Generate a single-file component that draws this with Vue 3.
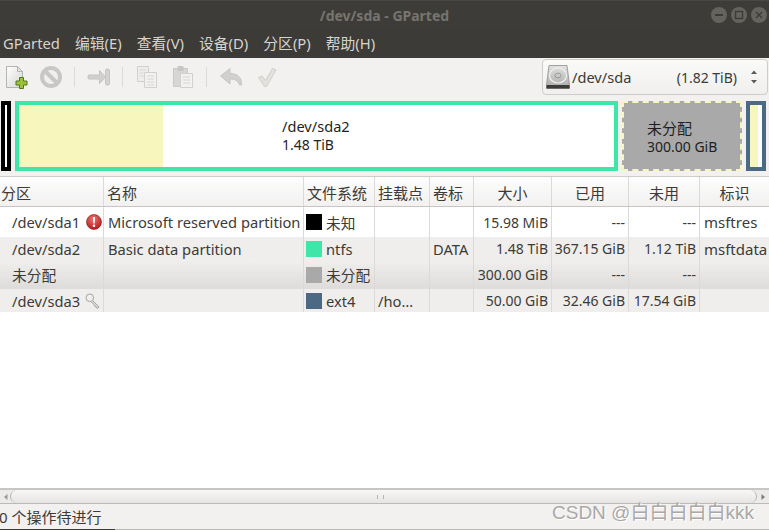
<script setup>
const menus = ['GParted', '编辑(E)', '查看(V)', '设备(D)', '分区(P)', '帮助(H)']
const heads = [
  { t: '分区', c: 'left' }, { t: '名称', c: 'left' }, { t: '文件系统', c: 'left' },
  { t: '挂载点', c: 'left' }, { t: '卷标', c: 'left' }, { t: '大小', c: 'mid' },
  { t: '已用', c: 'mid' }, { t: '未用', c: 'mid' }, { t: '标识', c: 'mid' }
]
const rows = [
  { cls: 'r1', p: '/dev/sda1', icon: 'err', name: 'Microsoft reserved partition', color: '#000000', fs: '未知', mount: '', label: '', size: '15.98 MiB', used: '---', free: '---', flag: 'msftres' },
  { cls: 'r2', p: '/dev/sda2', icon: '', name: 'Basic data partition', color: '#40e5aa', fs: 'ntfs', mount: '', label: 'DATA', size: '1.48 TiB', used: '367.15 GiB', free: '1.12 TiB', flag: 'msftdata' },
  { cls: 'r3', p: '未分配', icon: '', name: '', color: '#a9a9a9', fs: '未分配', mount: '', label: '', size: '300.00 GiB', used: '---', free: '---', flag: '' },
  { cls: 'r4', p: '/dev/sda3', icon: 'key', name: '', color: '#4b6983', fs: 'ext4', mount: '/ho…', label: '', size: '50.00 GiB', used: '32.46 GiB', free: '17.54 GiB', flag: '' }
]
</script>

<template>
  <div class="win">
    <header class="title">
      <span class="title-text">/dev/sda - GParted</span>
      <div class="wbtns">
        <span class="wbtn"><svg width="16" height="16" viewBox="0 0 16 16"><path d="M4 8h8" stroke="#3c3b37" stroke-width="2"/></svg></span>
        <span class="wbtn"><svg width="16" height="16" viewBox="0 0 16 16"><rect x="4.500" y="4.500" width="7" height="7" fill="none" stroke="#3c3b37" stroke-width="1.400"/></svg></span>
        <span class="wbtn"><svg width="16" height="16" viewBox="0 0 16 16"><path d="M5 5l6 6M11 5l-6 6" stroke="#3c3b37" stroke-width="1.400"/></svg></span>
      </div>
    </header>

    <nav class="menu">
      <span v-for="m in menus" :key="m" class="mi">{{ m }}</span>
    </nav>

    <div class="toolbar">
      <div class="tools">
        <svg class="ic" width="24" height="24" viewBox="0 0 24 24">
          <defs><linearGradient id="pg" x1="0" y1="0" x2="1" y2="1"><stop offset="0" stop-color="#ffffff"/><stop offset="1" stop-color="#d5d5d3"/></linearGradient></defs>
          <path d="M1.500 1.500h11l5 5v16h-16z" fill="url(#pg)" stroke="#b4b4b2"/>
          <path d="M12.500 1.500v5h5z" fill="#e4e4e2" stroke="#b4b4b2"/>
          <path d="M14.500 12.500h4v3.500h3.500v4h-3.500v3.500h-4v-3.500h-3.500v-4h3.500z" fill="#9cc23c" stroke="#4e7a10"/>
        </svg>
        <svg class="ic stop" width="24" height="24" viewBox="0 0 24 24">
          <circle cx="12" cy="12" r="9" fill="#f0efee" stroke="#c9c7c5" stroke-width="4"/>
          <path d="M5.500 5.500l13 13" stroke="#c9c7c5" stroke-width="4"/>
        </svg>
        <span class="sep first"></span>
        <svg class="ic res" width="24" height="24" viewBox="0 0 24 24">
          <path d="M1.500 10h11v-4.500l6 6.500-6 6.500v-4.500h-11q-1-2 0-4z" fill="#d2d0ce" stroke="#c6c4c2" stroke-linejoin="round"/>
          <rect x="18.500" y="4" width="4" height="16" rx="1.500" fill="#d4d2d0" stroke="#c6c4c2"/>
        </svg>
        <span class="sep second"></span>
        <svg class="ic copy" width="24" height="24" viewBox="0 0 24 24">
          <path d="M2.500 1.500h11v15h-11z" fill="#eeedec" stroke="#d2d0ce"/>
          <path d="M9.500 7.500h12v15h-12z" fill="#f2f1f0" stroke="#d2d0ce"/>
          <path d="M4.500 5h7M4.500 8h4M4.500 11h4M12 11h7M12 14h7M12 17h7M12 20h7" stroke="#d8d6d4"/>
        </svg>
        <svg class="ic paste" width="24" height="24" viewBox="0 0 24 24">
          <path d="M2.500 3.500h14v18h-14z" fill="#d8d6d4" stroke="#cbc9c7"/>
          <rect x="6.500" y="1" width="6" height="5" rx="1" fill="#c8c6c4"/>
          <path d="M9.500 8.500h12v14h-12z" fill="#f2f1f0" stroke="#d2d0ce"/>
          <path d="M12 12h7M12 15h7M12 18h7" stroke="#d8d6d4"/>
        </svg>
        <span class="sep third"></span>
        <svg class="ic undo" width="24" height="24" viewBox="0 0 24 24">
          <path d="M11 3.500l-9.500 7.500 9.500 8v-5c5 0 8 1.500 9.500 6h2c.5-8-4.500-11.500-11.500-11.500z" fill="#d2d0ce" stroke="#c8c6c4" stroke-linejoin="round"/>
        </svg>
        <svg class="ic apply" width="24" height="24" viewBox="0 0 24 24">
          <path d="M3.500 12.500l3.500-1.500 3.500 4.500 7-12 3.500 1.500-9.500 16.500h-2z" fill="#e2e1de" stroke="#d0cfcc" stroke-linejoin="round"/>
        </svg>
      </div>

      <div class="combo">
        <svg width="24" height="24" viewBox="0 0 24 24">
          <defs><linearGradient id="hd" x1="0" y1="0" x2="0" y2="1"><stop offset="0" stop-color="#e2e2e0"/><stop offset="1" stop-color="#a9a9a7"/></linearGradient></defs>
          <path d="M3 .5h18l2.500 19.500v3.500h-23v-3.500z" fill="url(#hd)" stroke="#8e8e8c" stroke-width=".8"/>
          <ellipse cx="12" cy="10.500" rx="8.500" ry="7.500" fill="none" stroke="#f0f0ee" stroke-width="1.200"/>
          <ellipse cx="12" cy="10.500" rx="3" ry="2.400" fill="none" stroke="#8e8e8c" stroke-width=".8"/>
          <rect x=".5" y="20" width="23" height="3.500" rx=".8" fill="#3c3b37"/>
        </svg>
        <span class="dev">/dev/sda</span>
        <span class="cap">(1.82 TiB)</span>
        <svg class="updown" width="8" height="16" viewBox="0 0 8 16"><path d="M4 1.500l3 3.500h-6zM4 14.500l-3-3.500h6z" fill="#5c5b57"/></svg>
      </div>
    </div>

    <section class="graph">
      <div class="seg sda1"><i></i></div>
      <div class="seg sda2">
        <div class="fill"></div>
        <div class="seg-label"><span class="latin">/dev/sda2</span><span>1.48 TiB</span></div>
      </div>
      <div class="seg free">
        <div class="free-label"><span class="cjk">未分配</span><span>300.00 GiB</span></div>
      </div>
      <div class="seg sda3"><b></b><i></i></div>
    </section>

    <section class="table">
      <div class="row head">
        <div v-for="h in heads" :key="h.t" class="cell" :class="h.c">{{ h.t }}</div>
      </div>
      <div v-for="r in rows" :key="r.p" class="row" :class="r.cls">
        <div class="cell pcol">
          <span>{{ r.p }}</span>
          <svg v-if="r.icon === 'err'" class="state" width="16" height="16" viewBox="0 0 16 16">
            <defs><radialGradient id="er" cx=".45" cy=".3" r=".8"><stop offset="0" stop-color="#f07070"/><stop offset="1" stop-color="#a81414"/></radialGradient></defs>
            <circle cx="8" cy="8" r="7.500" fill="url(#er)" stroke="#8a1010" stroke-width=".6"/>
            <path d="M7 3h2l-.3 6.500h-1.400z" fill="#fff"/><circle cx="8" cy="11.800" r="1.200" fill="#fff"/>
          </svg>
          <svg v-if="r.icon === 'key'" class="state key" width="16" height="16" viewBox="0 0 16 16">
            <circle cx="4.800" cy="4.800" r="3.800" fill="#efefed" stroke="#a5a4a2"/>
            <path d="M7.500 7.500l6.500 6.300-1 1.400-1.800-.4-.3-1.500-1.400-.3-.3-1.300-3.200-3" fill="#dcdbd9" stroke="#a5a4a2"/>
          </svg>
        </div>
        <div class="cell name">{{ r.name }}</div>
        <div class="cell fs"><i :style="{ background: r.color }"></i><span>{{ r.fs }}</span></div>
        <div class="cell pad">{{ r.mount }}</div>
        <div class="cell pad">{{ r.label }}</div>
        <div class="cell num">{{ r.size }}</div>
        <div class="cell num">{{ r.used }}</div>
        <div class="cell num">{{ r.free }}</div>
        <div class="cell flag">{{ r.flag }}</div>
      </div>
    </section>

    <div class="scroll">
      <svg width="6" height="8" viewBox="0 0 6 8" class="arrow"><path d="M4.500 1v6l-3.500-3z" fill="#9a9997"/></svg>
      <div class="thumb"><span class="grip"></span></div>
      <svg width="6" height="8" viewBox="0 0 6 8" class="arrow"><path d="M1.500 1v6l3.500-3z" fill="#7c7b79"/></svg>
    </div>

    <footer class="status">
      <span class="status-text">0 个操作待进行</span>
      <span class="mark">CSDN @白白白白白kkk</span>
    </footer>
    <div class="edge"><span></span></div>
  </div>
</template>

<style>
html, body { margin: 0; padding: 0; background: #fff; }
</style>

<style scoped>
.win {
  width: 769px; height: 530px; overflow: hidden; position: relative;
  display: flex; flex-direction: column; background: #f2f1f0; color: #3c3b37;
  font: 14px "Noto Sans", "Noto Sans CJK SC", sans-serif;
}
.title {
  height: 29px; flex: none; background: #3e3c38; position: relative;
  display: flex; align-items: center; justify-content: center;
  border-top: 1px solid #4a4844; box-sizing: border-box;
}
.title-text { color: #77756f; font-weight: 700; font-size: 14px; }
.wbtns { position: absolute; right: 2px; top: 6px; display: flex; gap: 4px; }
.wbtn { width: 16px; height: 16px; border-radius: 50%; background: #65635e; display: block; }
.wbtn svg { display: block; }
.menu {
  height: 29px; flex: none; background: #3c3b37; display: flex; align-items: flex-start;
  padding-left: 3px; gap: 15px; color: #d6d4cf; font-size: 14.800px; line-height: 29px;
}
.mi { white-space: nowrap; }
.toolbar { height: 39px; flex: none; display: flex; justify-content: space-between; padding-top: 1px; box-sizing: border-box; }
.tools { display: flex; align-items: flex-start; padding: 6px 0 0 5px; }
.ic { flex: none; display: block; }
.stop { margin-left: 10px; }
.sep { width: 1px; height: 20px; background: #dcdbd9; margin-top: 2px; flex: none; }
.sep.first { margin-left: 11px; }
.res { margin-left: 12px; }
.sep.second { margin-left: 11px; }
.copy { margin-left: 12px; }
.paste { margin-left: 12px; }
.sep.third { margin-left: 11px; }
.undo { margin-left: 12px; }
.apply { margin-left: 12px; }
.combo {
  width: 226px; height: 36px; box-sizing: border-box; margin-right: 1px;
  border: 1px solid #cfcdca; border-radius: 4px; background: linear-gradient(#fafaf9, #f0efee);
  display: flex; align-items: center; padding: 0 9px 0 3px; font-size: 14px;
}
.dev { margin-left: 2px; font-size: 14.600px; }
.cap { margin-left: auto; }
.updown { margin-left: 13px; }
.graph {
  height: 79px; flex: none; box-sizing: border-box; padding: 4px 3px 5px 1px;
  display: flex; gap: 4px;
}
.seg { box-sizing: border-box; height: 70px; flex: none; }
.sda1 { width: 10px; background: #000; padding: 4px; }
.sda1 i { display: block; width: 2px; height: 100%; background: #fff; }
.sda2 { width: 603px; border: 4px solid #40e5aa; background: #fff; display: flex; position: relative; }
.fill { width: 144px; background: #f7f7bd; flex: none; }
.seg-label { position: absolute; left: 263px; top: 13px; display: flex; flex-direction: column; gap: 1px; color: #1f1f1f; font-size: 14px; line-height: 17px; }
.latin { font-size: 14.600px; }
.free { width: 120px; background: #a9a9a9; border: 2px dashed #f7f7bd; display: flex; }
.free-label { margin: 15px 0 0 23px; display: flex; flex-direction: column; font-size: 14px; line-height: 18px; color: #1f1f1f; }
.cjk { font-size: 15px; line-height: 20px; }
.sda3 { width: 20px; border: 4px solid #4b6983; background: #fff; display: flex; }
.sda3 b { display: block; width: 8px; background: #f7f7bd; }
.table { flex: 1; background: #fff; border-top: 2px solid #cfcdca; min-height: 0; display: flex; flex-direction: column; }
.row {
  display: grid; grid-template-columns: 104px 200px 71px 55px 44px 78px 77px 71px 69px;
  flex: none; height: 23px;
}
.head { height: 30px; margin-top: -1px; background: linear-gradient(#fdfdfd, #f2f1f0); border-bottom: 1px solid #c8c6c3; box-sizing: border-box; }
.r1 { height: 30px; background: #fff; }
.r2 { background: #efeeed; }
.r3 { height: 29px; background: linear-gradient(#f0efee, #dddcda); }
.r4 { background: #efeeed; }
.cell {
  display: flex; align-items: center; min-width: 0; box-sizing: border-box; white-space: nowrap;
  border-right: 1px solid #dbdad8; font-size: 14.700px; overflow: hidden; color: #3c3b37;
}
.cell:last-child { border-right: 0; }
.head .cell { font-size: 15px; padding-top: 2px; }
.left { padding-left: 1px; }
.head .left:not(:first-child) { padding-left: 3px; }
.mid { justify-content: center; }
.pcol { padding-left: 12px; }
.state { margin-left: 6px; flex: none; }
.key { margin-left: 5px; }
.name { padding-left: 4px; }
.fs { padding-left: 2px; }
.fs i { width: 16px; height: 16px; flex: none; margin-right: 4px; }
.pad { padding-left: 3px; }
.num { justify-content: flex-end; padding-right: 3px; font-size: 14px; }
.flag { padding-left: 4px; font-size: 15px; }
.scroll {
  height: 16px; flex: none; box-sizing: border-box; border-top: 2px solid #c8c6c3; border-bottom: 1px solid #bcbab7;
  background: #ecebe9; display: flex; align-items: center; padding: 0 3px;
}
.arrow { flex: none; }
.thumb {
  flex: 1; height: 100%; margin: 0 3px 0 1px; box-sizing: border-box;
  background: linear-gradient(#f7f7f6, #e6e5e3); border: 1px solid #b5b3b0; border-width: 0 1px;
  border-radius: 7px; display: flex; justify-content: center; align-items: center;
}
.grip { width: 5px; height: 4px; border: solid #b5b3b0; border-width: 0 1px; margin-right: 6px; }
.status { height: 25px; flex: none; position: relative; display: flex; align-items: center; font-size: 15px; color: #3c3b37; }
.status-text { margin-left: -1px; white-space: nowrap; }
.mark {
  position: absolute; left: 552px; top: -3px; font: 19px/24px "Liberation Sans", "Noto Sans CJK SC", sans-serif;
  color: #a9a8a6; text-shadow: 1px 1px 0 #fff; white-space: nowrap;
}
.edge { height: 1px; flex: none; background: #bcbab7; }
.edge span { display: block; width: 115px; height: 1px; background: #3c3b37; }
</style>
